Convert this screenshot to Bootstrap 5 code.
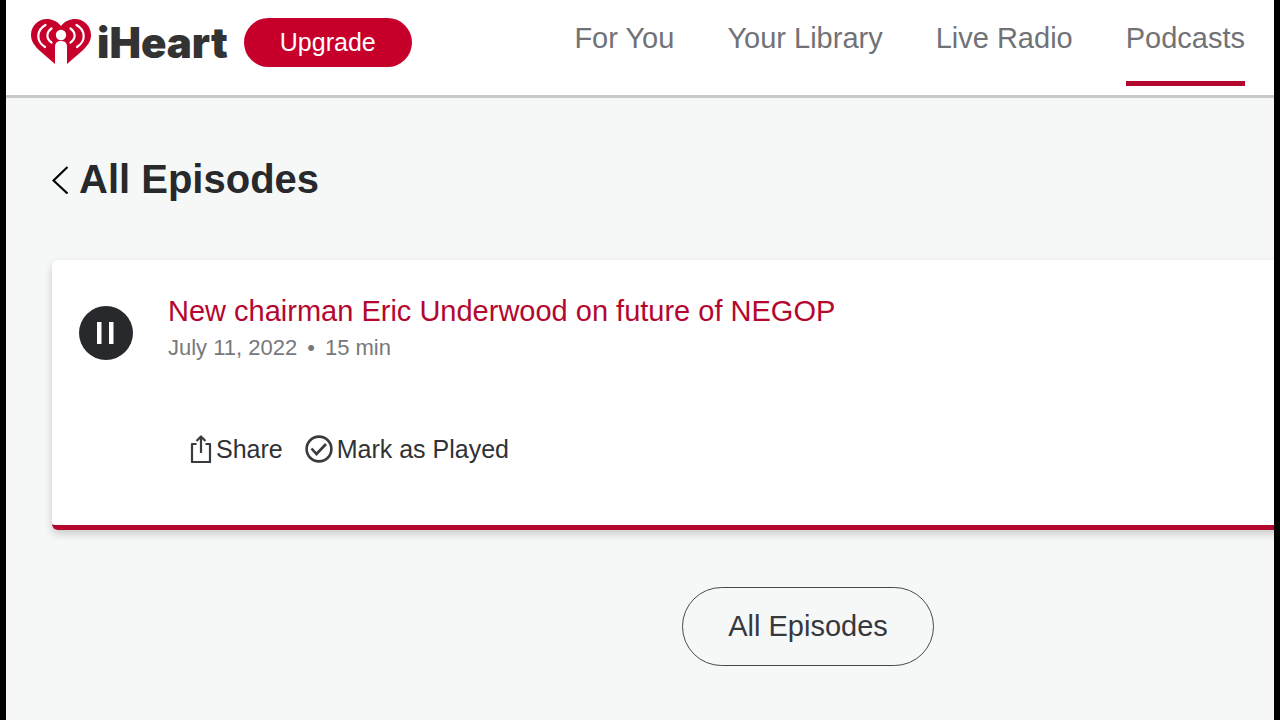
<!DOCTYPE html>
<html lang="en">
<head>
<meta charset="utf-8">
<meta name="viewport" content="width=device-width, initial-scale=1">
<title>All Episodes | iHeart</title>
<link href="https://cdn.jsdelivr.net/npm/bootstrap@5.3.0/dist/css/bootstrap.min.css" rel="stylesheet">
<style>
  :root { --ih-red: #c6002b; --ih-crimson: #b4072f; --ih-ink: #27292d; --ih-gray: #717277; }
  body { font-family: "Liberation Sans", Arial, sans-serif; background: #000; color: var(--ih-ink); padding: 0 6px; }
  .app-shell { background: #f6f8f8; }
  .top-bar { min-height: 98px; border-bottom: 3px solid #c8caca; padding: 0 29px 0 24px; }
  .brand-row { padding-top: 18px; }
  .brand-link { gap: 5px; color: #333; line-height: 48px; }
  .brand-word { font-family: Inter, sans-serif; font-weight: 900; font-size: 42px; }
  .btn-upgrade { --bs-btn-color: #fff; --bs-btn-bg: var(--ih-red); --bs-btn-hover-color: #fff; --bs-btn-hover-bg: var(--ih-crimson); font-size: 25px; line-height: 30px; padding: 9px 36px 10px; border: 0; }
  .main-nav { gap: 53px; }
  .main-nav .nav-link { font-size: 29px; line-height: 32px; color: var(--ih-gray); padding: 22px 0 27px; border-bottom: 5px solid transparent; }
  .main-nav .nav-link.active { border-bottom-color: var(--ih-crimson); }
  .page-main { padding: 57px 0 0 46px; }
  .page-wide { margin-right: -290px; }
  .page-title { font-size: 40px; line-height: 48px; font-weight: 700; gap: 10px; margin-bottom: 57px; }
  .episode { border: 0; border-bottom: 5px solid var(--ih-crimson); border-radius: 6px; box-shadow: 0 4px 8px rgba(0,0,0,.18); padding: 34px 27px 58px; margin-bottom: 57px; }
  .btn-pause { width: 54px; height: 54px; margin-top: 12px; background: var(--ih-ink); }
  .episode-text { margin-left: 35px; }
  .episode-title { font-size: 29px; line-height: 34px; color: var(--ih-crimson); }
  .episode-meta { font-size: 22px; line-height: 28px; margin-top: 6px; color: #77787c; gap: 10px; }
  .episode-actions { gap: 22px; margin: 69px 0 0 21px; }
  .btn-action { font-size: 25px; line-height: 36px; gap: 4px; color: #303236; }
  .btn-all { font-size: 29px; line-height: 34px; padding: 21px 45px 22px; color: #36383e; border: 1px solid #46484c; }
</style>
</head>
<body>
<div class="app-shell min-vh-100 overflow-hidden">
  <header class="top-bar bg-white d-flex justify-content-between align-items-start">
    <div class="brand-row d-flex align-items-center">
      <a href="#" class="brand-link d-flex align-items-center text-decoration-none me-3" aria-label="iHeart">
        <svg width="62" height="48" viewBox="0 0 62 48" aria-hidden="true">
          <path fill="#c6002b" d="M31 7C27 2 22 0 17 0 8 0 1 7 1 16c0 7 4 11 9 16l15 13V28c0-4 2-6 6-6s6 2 6 6v17l15-13c5-5 9-9 9-16C61 7 54 0 45 0c-5 0-10 2-14 7z"/>
          <circle cx="31" cy="16" r="5.200" fill="#fff"/>
          <g fill="none" stroke="#fff" stroke-width="2.200" stroke-linecap="round">
            <path d="M21.500 9.500c-5.500 4-5.500 10 0 14M40.500 9.500c5.500 4 5.500 10 0 14"/>
            <path d="M15.500 6c-9 5-10 16-.5 22M46.500 6c9 5 10 16 .5 22"/>
          </g>
        </svg>
        <span class="brand-word">iHeart</span>
      </a>
      <button type="button" class="btn btn-upgrade rounded-pill">Upgrade</button>
    </div>
    <nav class="nav main-nav flex-nowrap text-nowrap" aria-label="Main">
      <a class="nav-link" href="#">For You</a>
      <a class="nav-link" href="#">Your Library</a>
      <a class="nav-link" href="#">Live Radio</a>
      <a class="nav-link active" href="#" aria-current="page">Podcasts</a>
    </nav>
  </header>

  <main class="page-main">
    <div class="page-wide">
      <h1 class="page-title d-flex align-items-center">
        <a href="#" class="d-flex text-black" aria-label="Back">
          <svg width="17" height="30" viewBox="0 0 17 30" fill="none" stroke="currentColor" stroke-width="2.200" aria-hidden="true"><path d="M15.500 3 1.500 16.500l14 13"/></svg>
        </a>
        All Episodes
      </h1>

      <article class="card episode">
        <div class="d-flex align-items-start">
          <button type="button" class="btn btn-pause rounded-circle border-0 p-0 d-flex align-items-center justify-content-center" aria-label="Pause">
            <svg width="18" height="22" viewBox="0 0 18 22" fill="#fff" aria-hidden="true"><path d="M0 0h4.500v22H0zM12 0h4.500v22H12z"/></svg>
          </button>
          <div class="episode-text">
            <a href="#" class="episode-title d-block text-decoration-none">New chairman Eric Underwood on future of NEGOP</a>
            <div class="episode-meta d-flex"><span>July 11, 2022</span><span>•</span><span>15 min</span></div>
            <div class="episode-actions d-flex">
              <button type="button" class="btn btn-action border-0 p-0 d-flex align-items-center">
                <svg width="23" height="28" viewBox="0 0 23 28" fill="none" stroke="#3a3b3e" stroke-width="2.200" stroke-linejoin="round" aria-hidden="true"><path d="M7.500 9H3v18h18V9h-4.500M12 18V2M7.500 6 12 1.500 16.500 6"/></svg>
                Share
              </button>
              <button type="button" class="btn btn-action border-0 p-0 d-flex align-items-center">
                <svg width="28" height="28" viewBox="0 0 28 28" fill="none" stroke="#3a3b3e" stroke-width="2.600" aria-hidden="true"><circle cx="14" cy="14" r="12.400"/><path d="m6.500 13.500 5 5.500L21 9"/></svg>
                Mark as Played
              </button>
            </div>
          </div>
        </div>
      </article>

      <div class="text-center">
        <button type="button" class="btn btn-all rounded-pill">All Episodes</button>
      </div>
    </div>
  </main>
</div>
<script src="https://cdn.jsdelivr.net/npm/bootstrap@5.3.0/dist/js/bootstrap.bundle.min.js"></script>
</body>
</html>
